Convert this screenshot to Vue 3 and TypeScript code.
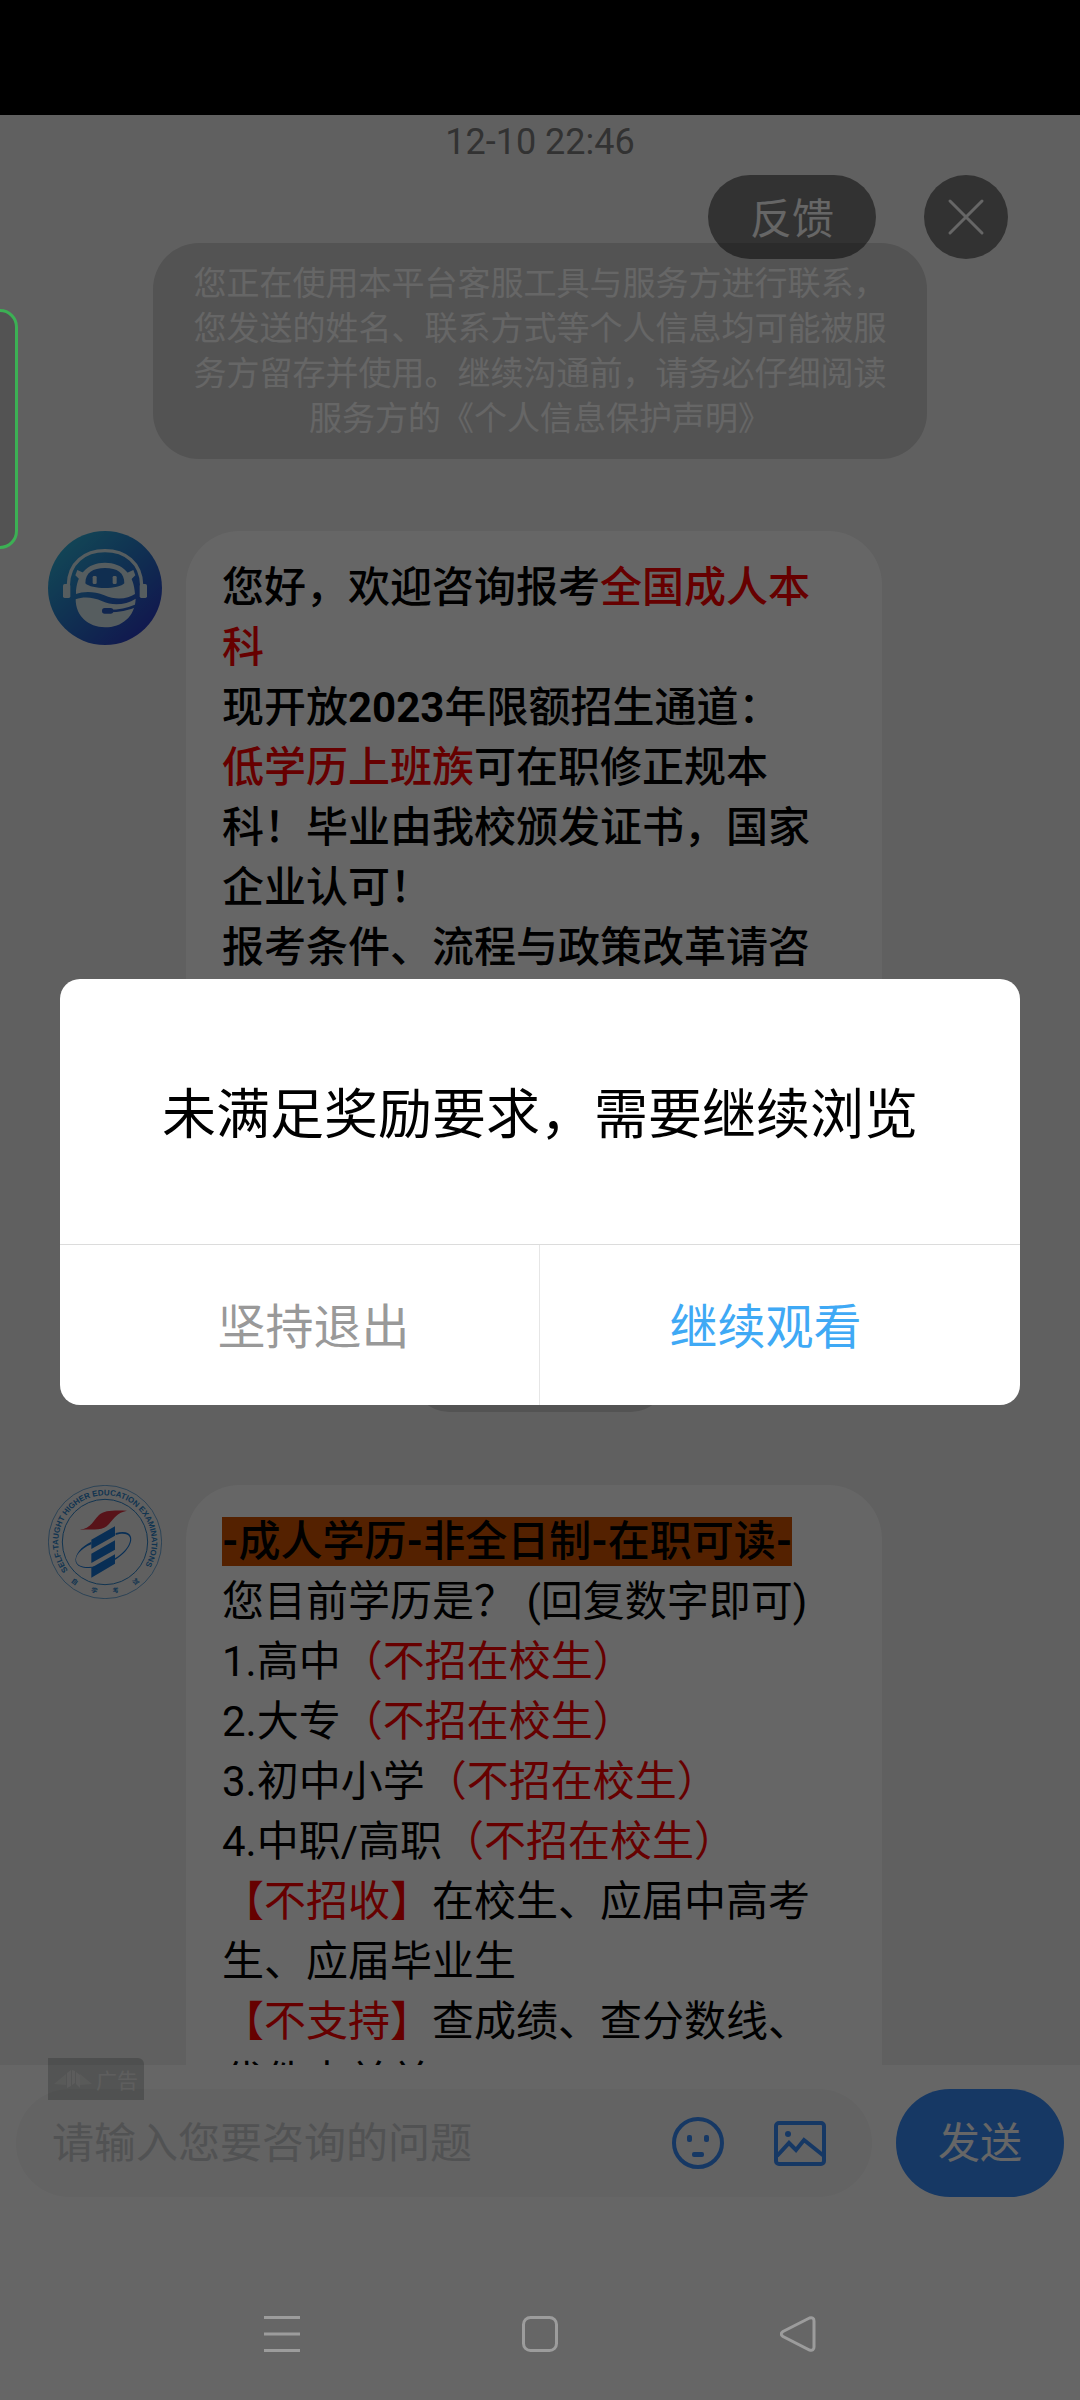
<script setup lang="ts">
import { ref } from 'vue'

interface Run {
  text: string
  tone?: 'red' | 'mark' | 'mark number' | 'number'
}

const question = ref('')

const welcome: Run[][] = [
  [{ text: '您好，欢迎咨询报考' }, { text: '全国成人本科', tone: 'red' }],
  [{ text: '现开放' }, { text: '2023', tone: 'number' }, { text: '年限额招生通道：' }],
  [{ text: '低学历上班族', tone: 'red' }, { text: '可在职修正规本科！毕业由我校颁发证书，国家企业认可！' }],
  [{ text: '报考条件、流程与政策改革请咨' }],
]

const survey: Run[][] = [
  [
    { text: '-', tone: 'mark number' },
    { text: '成人学历', tone: 'mark' },
    { text: '-', tone: 'mark number' },
    { text: '非全日制', tone: 'mark' },
    { text: '-', tone: 'mark number' },
    { text: '在职可读', tone: 'mark' },
    { text: '-', tone: 'mark number' },
  ],
  [{ text: '您目前学历是？ (回复数字即可)' }],
  [{ text: '1.高中' }, { text: '（不招在校生）', tone: 'red' }],
  [{ text: '2.大专' }, { text: '（不招在校生）', tone: 'red' }],
  [{ text: '3.初中小学' }, { text: '（不招在校生）', tone: 'red' }],
  [{ text: '4.中职/高职' }, { text: '（不招在校生）', tone: 'red' }],
  [{ text: '【不招收】', tone: 'red' }, { text: '在校生、应届中高考生、应届毕业生' }],
  [{ text: '【不支持】', tone: 'red' }, { text: '查成绩、查分数线、代件中关关' }],
]
</script>

<template>
  <div class="screen">
    <div class="status"></div>

    <main class="chat">
      <time class="time">12-10 22:46</time>
      <p class="notice">
        您正在使用本平台客服工具与服务方进行联系，您发送的姓名、联系方式等个人信息均可能被服务方留存并使用。继续沟通前，请务必仔细阅读服务方的《个人信息保护声明》
      </p>

      <article class="message">
        <svg class="avatar" viewBox="54 33 342 342" aria-hidden="true">
          <defs>
            <linearGradient id="robot" x1="0.1" y1="0.1" x2="0.85" y2="0.9">
              <stop offset="0" stop-color="#2fb2d8" />
              <stop offset="0.5" stop-color="#2878cc" />
              <stop offset="1" stop-color="#2c3cc4" />
            </linearGradient>
          </defs>
          <circle cx="225" cy="204" r="171" fill="url(#robot)" />
          <path d="M115 196C116 128 165 92 225 92s109 36 110 104" fill="none" stroke="#d8e8ee" stroke-width="10" />
          <rect x="99" y="192" width="22" height="42" rx="5" fill="#d8e8ee" />
          <rect x="329" y="192" width="22" height="42" rx="5" fill="#d8e8ee" />
          <path d="M142 150l18 8-6 26-18-18zM310 150l-18 8 6 26 18-18z" fill="#d8e8ee" />
          <path d="M138 222c0-58 34-94 87-94s88 36 90 94c-20 14-56 20-92 4-32-14-65-12-85-4z" fill="#d8e8ee" />
          <path d="M166 190c0-32 22-46 59-46s58 14 58 46c-14 18-98 20-117 0z" fill="#2974c8" />
          <rect x="188" y="168" width="12" height="24" rx="4" fill="#d8e8ee" />
          <rect x="248" y="168" width="12" height="24" rx="4" fill="#d8e8ee" />
          <path d="M137 238c22-8 50-8 80 6s70 12 100-8c-2 54-42 86-92 86s-88-34-88-84z" fill="#d8e8ee" />
          <path d="M238 273c30 0 52-4 80-16" fill="none" stroke="#285cc4" stroke-width="8" />
          <rect x="216" y="264" width="34" height="17" rx="8" fill="#285cc4" />
        </svg>
        <div class="bubble strong tall">
          <p v-for="(line, i) in welcome" :key="i">
            <span v-for="(run, j) in line" :key="j" :class="run.tone">{{ run.text }}</span>
          </p>
        </div>
      </article>

      <div class="pill"></div>

      <article class="message">
        <svg class="avatar" viewBox="54 44 342 342" aria-hidden="true">
          <defs>
            <path id="arc" d="M114 300A140 140 0 1 1 336 300" />
          </defs>
          <circle cx="225" cy="215" r="170" fill="none" stroke="#2c82c8" stroke-width="2" />
          <circle cx="225" cy="215" r="128" fill="none" stroke="#2c82c8" stroke-width="3" />
          <text class="seal"><textPath href="#arc">SELF-TAUGHT HIGHER EDUCATION EXAMINATIONS</textPath></text>
          <g class="seal-cn">
            <text transform="translate(134 334) rotate(36)" y="7">自</text>
            <text transform="translate(193 360) rotate(12)" y="7">学</text>
            <text transform="translate(257 360) rotate(-12)" y="7">考</text>
            <text transform="translate(317 334) rotate(-36)" y="7">试</text>
          </g>
          <path d="M149 178c34-4 38-24 58-44 16-14 40-14 84-13-30 6-38 22-54 40-18 20-40 16-88 17z" fill="#dc3040" />
          <g fill="#1474d4">
            <path d="M184 208l71-40v28l-71 40zM184 250l71-40v28l-71 40zM184 292l71-40v28l-71 42z" />
            <path d="M184 222c-34 14-50 36-45 52 6 20 50 22 92 2 50-20 76-58 68-76-6-12-24-12-42-6v-6c26-6 42-2 46 12 6 26-28 64-74 82-44 18-86 14-92-8-4-20 16-46 47-60z" />
          </g>
        </svg>
        <div class="bubble">
          <p v-for="(line, i) in survey" :key="i">
            <span v-for="(run, j) in line" :key="j" :class="run.tone">{{ run.text }}</span>
          </p>
        </div>
      </article>
    </main>

    <div class="float-actions">
      <button type="button" class="feedback">反馈</button>
      <button type="button" class="close" aria-label="关闭">
        <svg viewBox="0 0 84 84"><path d="M26 26l32 32M58 26L26 58" stroke="#fff" stroke-width="3" stroke-linecap="round" /></svg>
      </button>
    </div>

    <form class="composer" @submit.prevent>
      <div class="field">
        <input v-model="question" type="text" placeholder="请输入您要咨询的问题" aria-label="请输入您要咨询的问题" />
        <button type="button" class="tool" aria-label="表情">
          <svg viewBox="0 0 52 52">
            <circle cx="26" cy="26" r="24" fill="none" stroke="#388cfa" stroke-width="4" />
            <rect x="15" y="18" width="5" height="7" rx="2" fill="#388cfa" />
            <rect x="32" y="18" width="5" height="7" rx="2" fill="#388cfa" />
            <rect x="20" y="35" width="12" height="5" rx="2" fill="#388cfa" />
          </svg>
        </button>
        <button type="button" class="tool" aria-label="图片">
          <svg viewBox="0 0 52 52" fill="none" stroke="#388cfa" stroke-width="4">
            <rect x="2" y="6" width="48" height="41" rx="3" />
            <path d="M3 39l12-13 7 7 8-10 20 16" />
            <circle cx="14" cy="17" r="3" fill="#388cfa" stroke="none" />
          </svg>
        </button>
      </div>
      <button type="submit" class="send">发送</button>
      <div class="ad">
        <svg viewBox="0 0 38 18" aria-hidden="true">
          <g fill="#fff" opacity="0.45">
            <path d="M0 14L12 4v11zM26 4l12 10-12 1z" opacity="0.7" />
            <path d="M13 3l4-3v16l-4 2zM18 0l3 1v12l-3 2zM22 2l4 3v13l-4-4z" />
          </g>
        </svg>
        <span>广告</span>
      </div>
    </form>

    <div class="backdrop">
      <section class="dialog" role="dialog" aria-modal="true" aria-labelledby="dialog-title">
        <h1 id="dialog-title">未满足奖励要求，需要继续浏览</h1>
        <div class="choices">
          <button type="button" class="leave">坚持退出</button>
          <button type="button" class="stay">继续观看</button>
        </div>
      </section>
    </div>

    <div class="side-handle"></div>

    <nav class="system-nav">
      <button type="button" aria-label="菜单">
        <svg viewBox="0 0 36 36"><path d="M0 1.500h36M0 18h36M0 34.500h36" /></svg>
      </button>
      <button type="button" aria-label="主页">
        <svg viewBox="0 0 36 36"><rect x="1.500" y="1.500" width="33" height="33" rx="7" /></svg>
      </button>
      <button type="button" aria-label="返回">
        <svg viewBox="0 0 36 36"><path d="M29.500 2L3 15.500Q-.5 18 3 20.500L29.500 34Q34 35 34 31V5Q34 1 29.500 2z" /></svg>
      </button>
    </nav>
  </div>
</template>

<style>
body {
  margin: 0;
}
</style>

<style scoped>
.screen {
  position: relative;
  display: flex;
  flex-direction: column;
  height: 100vh;
  overflow: hidden;
  background: #fff;
  color: #000;
  font-family: Roboto, "Noto Sans CJK SC", sans-serif;
  text-spacing-trim: space-all;
}

button {
  border: 0;
  padding: 0;
  background: none;
  color: inherit;
  font: inherit;
}

p,
h1 {
  margin: 0;
}

svg {
  display: block;
}

.status {
  flex: none;
  height: 115px;
  background: #000;
}

.chat {
  flex: 1 1 0;
  min-height: 0;
  overflow: hidden;
  display: flex;
  flex-direction: column;
  background: #f0f0f0;
}

.chat > * {
  flex: none;
}

.time {
  text-align: center;
  font-size: 36px;
  line-height: 54px;
  color: #7d7d7d;
}

.notice {
  margin: 74px 153px 72px;
  padding: 18px 40px;
  border-radius: 46px;
  background: #cfcfcf;
  color: #fff;
  font-size: 33px;
  line-height: 45px;
  text-align: center;
}

.message {
  display: flex;
  align-items: flex-start;
  gap: 24px;
  padding: 0 198px 0 48px;
}

.avatar {
  flex: none;
  width: 114px;
  height: 114px;
}

.seal {
  font-family: "Liberation Sans", sans-serif;
  font-size: 24px;
  font-weight: 700;
  fill: #2c82c8;
}

.seal-cn {
  font-family: "Noto Sans CJK SC", sans-serif;
  font-size: 19px;
  font-weight: 700;
  text-anchor: middle;
  fill: #2c82c8;
}

.bubble {
  flex: 1;
  box-sizing: border-box;
  padding: 27px 36px;
  border-radius: 54px;
  background: #fff;
  font-size: 42px;
  line-height: 60px;
}

.tall {
  min-height: 761px;
}

.strong,
.mark {
  font-weight: 500;
}

.number {
  font-weight: 700;
}

.red {
  color: #f00;
}

.mark {
  background: #d35400;
}

.pill {
  align-self: center;
  width: 254px;
  height: 72px;
  margin: 48px 0 73px;
  border-radius: 36px;
  background: #cfcfcf;
}

.float-actions {
  position: absolute;
  top: 175px;
  right: 72px;
  display: flex;
  gap: 48px;
  color: #fff;
  font-size: 42px;
}

.feedback,
.close {
  height: 84px;
  border-radius: 42px;
  background: rgba(0, 0, 0, 0.48);
}

.feedback {
  width: 168px;
  padding-bottom: 4px;
}

.close {
  width: 84px;
}

.composer {
  position: relative;
  flex: none;
  display: flex;
  gap: 24px;
  padding: 24px 16px 71px;
  background: #fff;
  font-size: 42px;
}

.field {
  flex: 1;
  min-width: 0;
  display: flex;
  align-items: center;
  gap: 50px;
  height: 108px;
  box-sizing: border-box;
  padding: 0 46px 0 36px;
  border-radius: 54px;
  background: #f7f7f7;
}

.field input {
  flex: 1;
  min-width: 0;
  padding: 0;
  border: 0;
  outline: 0;
  background: none;
  font: inherit;
}

.field input::placeholder {
  color: #cbcdcf;
  opacity: 1;
}

.tool {
  flex: none;
  width: 52px;
  height: 52px;
}

.send {
  flex: none;
  width: 168px;
  height: 108px;
  padding-bottom: 8px;
  border-radius: 54px;
  background: #378cfa;
  color: #fff;
}

.ad {
  position: absolute;
  top: -7px;
  left: 48px;
  display: flex;
  align-items: center;
  justify-content: center;
  gap: 4px;
  width: 96px;
  height: 42px;
  border-radius: 0 6px 0 0;
  background: rgba(20, 30, 25, 0.2);
  color: rgba(255, 255, 255, 0.6);
  font-size: 21px;
}

.ad svg {
  width: 38px;
  height: 18px;
}

.backdrop {
  position: absolute;
  inset: 115px 0 0;
  display: flex;
  align-items: center;
  padding: 0 60px 132px;
  background: rgba(0, 0, 0, 0.6);
}

.dialog {
  flex: 1;
  border-radius: 20px;
  overflow: hidden;
  background: #fff;
}

.dialog h1 {
  padding: 97px 0 88px;
  font-size: 54px;
  font-weight: 400;
  line-height: 80px;
  text-align: center;
}

.choices {
  display: flex;
  border-top: 1px solid #dcdcdc;
}

.choices button {
  flex: 1;
  box-sizing: border-box;
  height: 160px;
  padding-bottom: 4px;
  font-size: 48px;
}

.choices .leave {
  padding-left: 28px;
  border-right: 1px solid #e6e6e6;
  color: #999;
}

.choices .stay {
  padding-right: 29px;
  color: #3fa9f5;
}

.side-handle {
  position: absolute;
  top: 309px;
  left: -20px;
  box-sizing: border-box;
  width: 38px;
  height: 240px;
  border: 3px solid #3cb054;
  border-radius: 18px;
  background: #535353;
}

.system-nav {
  position: relative;
  flex: none;
  display: flex;
  height: 132px;
  padding: 0 153px;
}

.system-nav button {
  flex: 1;
  display: flex;
  align-items: center;
  justify-content: center;
}

.system-nav svg {
  width: 36px;
  height: 36px;
  fill: none;
  stroke: #9c9c9c;
  stroke-width: 3px;
}
</style>
